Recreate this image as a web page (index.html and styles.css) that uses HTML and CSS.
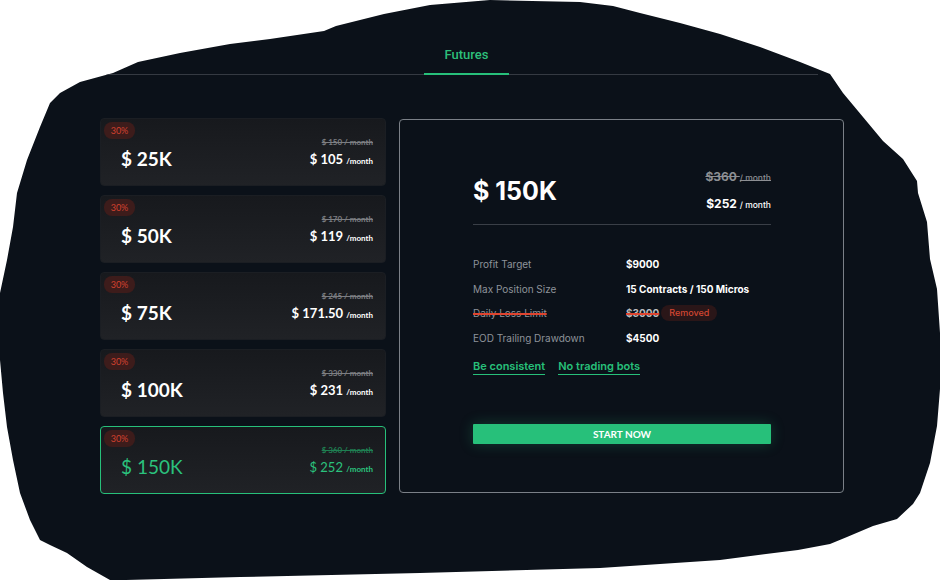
FILE: index.html
```html
<!DOCTYPE html>
<html lang="en">
<head>
<meta charset="utf-8">
<title>Futures</title>
<link rel="stylesheet" href="styles.css">
</head>
<body>
<div class="page">
  <div class="tabs">
    <div class="tab">Futures</div>
  </div>
  <div class="main">
    <div class="cards">
      <div class="card">
        <span class="badge">30%</span>
        <div class="amount">$ 25K</div>
        <div class="prices">
          <div class="old">$ 150 / month</div>
          <div class="now">$ 105 <small>/month</small></div>
        </div>
      </div>
      <div class="card">
        <span class="badge">30%</span>
        <div class="amount">$ 50K</div>
        <div class="prices">
          <div class="old">$ 170 / month</div>
          <div class="now">$ 119 <small>/month</small></div>
        </div>
      </div>
      <div class="card">
        <span class="badge">30%</span>
        <div class="amount">$ 75K</div>
        <div class="prices">
          <div class="old">$ 245 / month</div>
          <div class="now">$ 171.50 <small>/month</small></div>
        </div>
      </div>
      <div class="card">
        <span class="badge">30%</span>
        <div class="amount">$ 100K</div>
        <div class="prices">
          <div class="old">$ 330 / month</div>
          <div class="now">$ 231 <small>/month</small></div>
        </div>
      </div>
      <div class="card active">
        <span class="badge">30%</span>
        <div class="amount">$ 150K</div>
        <div class="prices">
          <div class="old">$ 360 / month</div>
          <div class="now">$ 252 <small>/month</small></div>
        </div>
      </div>
    </div>

    <div class="panel">
      <div class="head">
        <div class="big">$ 150K</div>
        <div class="hprices">
          <div class="hold">$360 <small>/ month</small></div>
          <div class="hnow">$252 <small>/ month</small></div>
        </div>
      </div>
      <div class="rows">
        <div class="row"><span class="label">Profit Target</span><span class="val">$9000</span></div>
        <div class="row"><span class="label">Max Position Size</span><span class="val">15 Contracts / 150 Micros</span></div>
        <div class="row"><span class="label strike">Daily Loss Limit</span><span class="val strike">$3000</span><span class="pill">Removed</span></div>
        <div class="row"><span class="label">EOD Trailing Drawdown</span><span class="val">$4500</span></div>
      </div>
      <div class="links">
        <span class="link">Be consistent</span>
        <span class="link">No trading bots</span>
      </div>
      <button class="btn">Start now</button>
    </div>
  </div>
</div>
</body>
</html>
```
FILE: styles.css
```css
body {
  margin: 0;
  background: #ffffff;
}

.page {
  width: 940px;
  height: 580px;
  background: #0b1119;
  display: flex;
  flex-direction: column;
  font-family: Inter, "Liberation Sans", sans-serif;
  clip-path: polygon(490px 0px, 580px 2px, 613px 6px, 640px 13px, 680px 23px, 720px 34px, 760px 47px, 800px 62px, 830px 74px, 843px 93px, 883px 141px, 903px 159px, 917px 181px, 918px 193px, 927px 222px, 930px 259px, 937px 289px, 940px 333px, 940px 389px, 937px 426px, 930px 463px, 920px 493px, 913px 504px, 897px 519px, 873px 526px, 847px 537px, 830px 544px, 798px 550px, 720px 560px, 600px 568px, 420px 573px, 240px 577px, 126px 580px, 110px 580px, 87px 567px, 67px 553px, 50px 545px, 40px 540px, 30px 520px, 20px 493px, 13px 460px, 7px 427px, 3px 393px, 0px 360px, 0px 293px, 7px 260px, 13px 227px, 17px 193px, 27px 160px, 40px 127px, 50px 103px, 60px 93px, 80px 82px, 113px 73px, 138px 62px, 180px 53px, 230px 44px, 270px 39px, 324px 31px, 336px 26px, 384px 14px, 430px 5px);
}

/* tabs */
.tabs {
  margin-left: 100px;
  width: 718px;
  height: 74px;
  border-bottom: 1px solid #353a42;
  display: flex;
  align-items: flex-end;
}

.tab {
  margin-left: 324px;
  margin-bottom: -1px;
  width: 85px;
  text-align: center;
  font-family: Roboto, sans-serif;
  font-weight: 500;
  font-size: 13px;
  line-height: 16px;
  color: #2dbf7a;
  padding-bottom: 10px;
  border-bottom: 2px solid #27c07a;
}

/* main */
.main {
  display: flex;
  align-items: flex-start;
  gap: 13px;
  margin: 43px 0 0 100px;
}

.cards {
  width: 286px;
  display: flex;
  flex-direction: column;
  gap: 9px;
}

.card {
  position: relative;
  height: 68px;
  box-sizing: border-box;
  border: 1px solid #1b1e23;
  border-radius: 4px;
  background: linear-gradient(180deg, #17191d 0%, #202226 100%);
  display: flex;
  justify-content: space-between;
  align-items: flex-start;
  padding: 17px 12px 0 20px;
  font-family: Lato, "Open Sans", sans-serif;
}

.badge {
  position: absolute;
  left: 3px;
  top: 3px;
  width: 31px;
  height: 17px;
  border-radius: 8px;
  background: #3d1c1b;
  color: #d2412f;
  font-size: 9px;
  line-height: 17px;
  text-align: center;
}

.amount {
  margin-top: 12px;
  font-size: 19px;
  line-height: 22px;
  font-weight: 700;
  color: #ffffff;
}

.prices {
  text-align: right;
}

.old {
  font-size: 8px;
  line-height: 12px;
  font-weight: 700;
  color: #7c7e82;
  text-decoration: line-through;
}

.now {
  margin-top: 3px;
  font-size: 13px;
  line-height: 16px;
  font-weight: 700;
  color: #ffffff;
}

.now small {
  font-size: 8px;
}

.card.active {
  border-color: #27c07a;
}

.card.active .amount,
.card.active .now {
  color: #2bc27d;
  font-weight: 400;
}

.card.active .now small {
  font-weight: 700;
}

.card.active .old {
  color: #1f7f52;
}

/* panel */
.panel {
  width: 445px;
  height: 374px;
  margin-top: 1px;
  box-sizing: border-box;
  border: 1px solid #7b8087;
  border-radius: 4px;
  padding: 50px 72px 0 73px;
  display: flex;
  flex-direction: column;
}

.head {
  display: flex;
  justify-content: space-between;
  align-items: center;
  padding-bottom: 12px;
  border-bottom: 1px solid #3a3f47;
}

.big {
  font-size: 25px;
  line-height: 30px;
  font-weight: 700;
  color: #ffffff;
}

.hprices {
  display: flex;
  flex-direction: column;
  gap: 12px;
  text-align: right;
}

.hold,
.hnow {
  font-size: 12px;
  line-height: 14px;
  font-weight: 700;
}

.hold {
  color: #8d8f93;
  text-decoration: line-through;
}

.hnow {
  color: #ffffff;
}

.hold small,
.hnow small {
  font-size: 8.5px;
  font-weight: 500;
}

.rows {
  margin-top: 32px;
  display: flex;
  flex-direction: column;
  gap: 10.7px;
}

.row {
  display: flex;
  align-items: center;
  height: 14px;
  font-size: 10px;
  line-height: 14px;
}

.label {
  width: 153px;
  color: #8e9399;
}

.val {
  font-weight: 700;
  color: #ffffff;
}

.strike {
  text-decoration: line-through;
  text-decoration-color: #e0442f;
  text-decoration-thickness: 2px;
}

.val.strike {
  color: #b9bbbe;
}

.pill {
  margin-left: 2px;
  padding: 0 8px;
  height: 16px;
  line-height: 16px;
  border-radius: 8px;
  background: #2a1618;
  color: #d24632;
  font-size: 9px;
  font-weight: 500;
}

.links {
  margin-top: 14px;
  display: flex;
  gap: 13px;
}

.link {
  font-size: 11px;
  line-height: 14px;
  font-weight: 600;
  color: #27c07a;
  padding-bottom: 1px;
  border-bottom: 1.5px solid #27c07a;
}

.btn {
  display: block;
  width: 100%;
  margin-top: 49px;
  height: 20px;
  padding: 0;
  border: 0;
  border-radius: 1px;
  background: #27c07a;
  color: #ffffff;
  font-family: Lato, "Open Sans", sans-serif;
  font-size: 10px;
  line-height: 20px;
  font-weight: 700;
  text-transform: uppercase;
  box-shadow: 0 0 14px rgba(39, 192, 122, 0.25);
}
```
